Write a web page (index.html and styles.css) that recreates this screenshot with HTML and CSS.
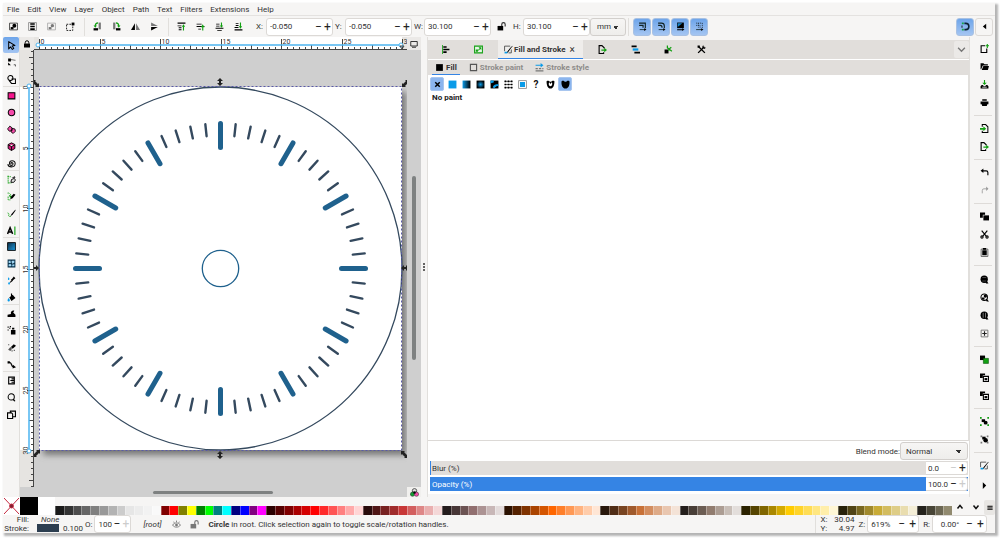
FILE: index.html
```html
<!DOCTYPE html>
<html lang="en">
<head>
<meta charset="utf-8">
<title>Vector editor</title>
<link rel="stylesheet" href="styles.css">
</head>
<body>
<svg class="defs" aria-hidden="true">
  <defs>
    <linearGradient id="g-lin"><stop offset="0" stop-color="#0a9be8"/><stop offset="1" stop-color="#000"/></linearGradient>
    <linearGradient id="g-dia" x2="1" y2="1"><stop offset="0" stop-color="#0b2c44"/><stop offset="1" stop-color="#1e9be0"/></linearGradient>
    <radialGradient id="g-rad"><stop offset="0" stop-color="#0a9be8"/><stop offset="1" stop-color="#000"/></radialGradient>
    <symbol id="i-selall" viewBox="0 0 16 16"><path fill="none" stroke="#333" stroke-width="1.5" d="M1 2h14v12H1z"/><path d="M3 9h5v4H3z"/><circle cx="9.500" cy="6.500" r="3.500"/></symbol>
    <symbol id="i-sellayers" viewBox="0 0 16 16"><path fill="none" stroke="#888" stroke-width="1.500" d="M1 1h14v14H1z"/><path d="M4 2h8v3H4zM4 6.500h8v3H4zM4 11h8v3H4z"/></symbol>
    <symbol id="i-desel" viewBox="0 0 16 16"><path fill="none" stroke="#aaa" stroke-width="1.500" d="M1 2h14v12H1z"/><path fill="#777" d="M3 9h5v4H3z"/><circle cx="9.500" cy="6.500" r="3" fill="#777"/></symbol>
    <symbol id="i-touch" viewBox="0 0 16 16"><path fill="none" stroke="#000" stroke-width="1.500" stroke-dasharray="3 2" d="M1 4h11v11H1z"/><path d="M10 1h5v5h-5z"/></symbol>
    <symbol id="i-rotl" viewBox="0 0 16 16"><path d="M1 11h8v4H1z"/><path fill="#777" d="M10 1h4v12h-4z"/><path fill="none" stroke="#12a012" stroke-width="2" d="M9 1.500C5 1.500 4 4 4 7"/><path fill="#12a012" d="M1 6h6l-3 4z"/></symbol>
    <symbol id="i-rotr" viewBox="0 0 16 16"><path d="M7 11h8v4H7z"/><path fill="#777" d="M2 1h4v12H2z"/><path fill="none" stroke="#12a012" stroke-width="2" d="M7 1.500c4 0 5 2.500 5 5.500"/><path fill="#12a012" d="M9 6h6l-3 4z"/></symbol>
    <symbol id="i-fliph" viewBox="0 0 16 16"><path d="M7 2v12H0z"/><path fill="#777" d="M9 2v12h7z"/></symbol>
    <symbol id="i-flipv" viewBox="0 0 16 16"><path d="M2 9h12L2 15z"/><path fill="#777" d="M2 7h12L2 1z"/></symbol>
    <symbol id="i-top" viewBox="0 0 16 16"><path d="M1 1h14v2H1zM1 6h7v1.500H1zM3 9.500h5V11H3zM3 13h5v1.500H3z"/><path fill="#12a012" d="M8.500 8.500 11.500 4l3 4.500h-2V15h-2V8.500z"/></symbol>
    <symbol id="i-raise" viewBox="0 0 16 16"><path d="M1 3h9v1.500H1zM1 7h14v2H1zM4 12h5v1.500H4z"/><path fill="#12a012" d="M8.500 9.500 12 4l3 5.500h-2V15h-2V9.500z"/></symbol>
    <symbol id="i-lower" viewBox="0 0 16 16"><path d="M1 10h14v2H1zM2 3h6v1.500H2zM2 6.500h6V8H2zM4 14h8v1.500H4z"/><path fill="#12a012" d="M8.500 6h2V1h2v5h2l-3 4z"/></symbol>
    <symbol id="i-bottom" viewBox="0 0 16 16"><path d="M1 13h14v2H1zM3 2h5v1.500H3zM3 5.500h5V7H3zM1 9h7v1.500H1z"/><path fill="#12a012" d="M8.500 7.500h2V1h2v6.500h2l-3 4.500z"/></symbol>
    <symbol id="i-unlock" viewBox="0 0 16 16"><path d="M1 7h10v8H1z"/><path fill="none" stroke="currentColor" stroke-width="2" d="M8.500 7V4a3 3 0 0 1 6 0v4"/></symbol>
    <symbol id="i-lock" viewBox="0 0 16 16"><path d="M2 7h12v8H2z"/><path fill="none" stroke="#000" stroke-width="2" d="M4.500 7V5a3.500 3.500 0 0 1 7 0v2"/></symbol>
    <symbol id="i-af1" viewBox="0 0 16 16"><path fill="none" stroke="#122" stroke-width="2" d="M2 2h11v9M2 6h7v4"/><path fill="none" stroke="#122" stroke-width="1.500" d="M3 13.500h10"/><path d="m11 11 4 2.500-4 2.500z"/></symbol>
    <symbol id="i-af2" viewBox="0 0 16 16"><path fill="none" stroke="#122" stroke-width="2" d="M2 2h6q5 0 5 5v4M2 6h4q3 0 3 4"/><path fill="none" stroke="#122" stroke-width="1.500" d="M3 13.500h10"/><path d="m11 11 4 2.500-4 2.500z"/></symbol>
    <symbol id="i-af3" viewBox="0 0 16 16"><path d="M2 1h12v10H2z"/><path fill="#1683c9" d="M3 2h8L3 9z"/><path d="M2 13h10v1.500H2zM11 11l4 2.500-4 2.500z"/></symbol>
    <symbol id="i-af4" viewBox="0 0 16 16"><path fill="none" stroke="#234" stroke-width="1.600" stroke-dasharray="2 1.500" d="M2 2h11v9M2 6h7v5M6 2v8"/><path fill="none" stroke="#122" stroke-width="1.500" d="M2 13.500h10"/><path d="m11 11 4 2.500-4 2.500z"/></symbol>
    <symbol id="i-snap" viewBox="0 0 16 16"><path fill="none" stroke="#0c2233" stroke-width="2.800" d="M6 2.500h2.500a5.500 5.500 0 0 1 0 11H6"/><path fill="#16a34a" d="M1.500 1H5v3H1.500zM1.500 12H5v3H1.500z"/><path d="M1 6h1.500v4H1z"/></symbol>
    <symbol id="i-arrl" viewBox="0 0 16 16"><path d="M11 3v10L5 8z"/></symbol>
    <symbol id="i-arrr" viewBox="0 0 16 16"><path d="M5 2v12l6-6z"/></symbol>
    <symbol id="i-sel" viewBox="0 0 16 16"><path fill="#9cc0f0" stroke="#000" stroke-width="1.800" stroke-linejoin="round" d="m3 1 11 7-5 1 3 4-2.500 2-3-4.500L3 14z"/></symbol>
    <symbol id="i-node" viewBox="0 0 16 16"><path d="M2 1h5v5H2zM2 8l5 5H2z"/><path fill="none" stroke="#444" stroke-width="1.500" d="M7 3c4 0 5 1 8 1M12 12h3v3"/></symbol>
    <symbol id="i-shapeb" viewBox="0 0 16 16"><g fill="none" stroke="#000" stroke-width="1.800"><circle cx="6" cy="5.500" r="4.500"/><path d="M8 7h7v8H8l-4-5"/></g></symbol>
    <symbol id="i-rect" viewBox="0 0 16 16"><path fill="#f5168c" stroke="#000" stroke-width="1.800" d="M2 3h12v11H2z"/></symbol>
    <symbol id="i-ell" viewBox="0 0 16 16"><circle cx="8" cy="8" r="5.800" fill="#f54aaa" stroke="#000" stroke-width="1.800"/></symbol>
    <symbol id="i-star" viewBox="0 0 16 16"><path fill="#f54aaa" stroke="#000" stroke-width="1.500" d="m5 2 4 3 0 5-5 1-3-4zM9 6l5 1 1 4-4 4-4-3z"/></symbol>
    <symbol id="i-box3" viewBox="0 0 16 16"><path fill="#d3187b" stroke="#000" stroke-width="1.600" d="m8 1.500 6 3v7L8 15l-6-3.500v-7zM2 5l6 3 6-3M8 8v7"/></symbol>
    <symbol id="i-spiral" viewBox="0 0 16 16"><path fill="none" stroke="#111" stroke-width="1.900" d="M8 9c-1.500 0-1.500-2.500.5-2.500 3 0 3 5-.5 5-5 0-5-8.500 1-8.500 8 0 7 11-1 11-3 0-6-1-6.500-5"/></symbol>
    <symbol id="i-pen" viewBox="0 0 16 16"><path fill="none" stroke="#12a012" stroke-width="1.500" stroke-dasharray="3 1" d="M2 1v14M1 3h6M2 14h6"/><path fill="#ddd" stroke="#000" stroke-width="1.600" d="m7 13 1-5 5-2 2 3-3 4z"/><path d="m8 5 6-3 1 3z"/></symbol>
    <symbol id="i-pencil" viewBox="0 0 16 16"><path fill="none" stroke="#12a012" stroke-width="1.500" stroke-dasharray="3 1" d="M1 2c4-1 4 3 7 3M2 8v6h4"/><path d="m6 12 1-4 5-5 3 2-5 6-4 2z"/><path fill="#12a012" d="m3 5 5 2-2 4z"/></symbol>
    <symbol id="i-callig" viewBox="0 0 16 16"><path fill="none" stroke="#12a012" stroke-width="1.500" stroke-dasharray="3 1" d="M1 7c3 1 3 2 2 4s2 3 4 2"/><path d="M15 1 8 9l-2 4 4-3 5-7z"/></symbol>
    <symbol id="i-text" viewBox="0 0 16 16"><path fill="none" stroke="#000" stroke-width="2.600" d="M1 14 5.500 3 10 14M3 10.500h5"/><path fill="#12a012" d="M13 1h2v15h-2z"/></symbol>
    <symbol id="i-grad" viewBox="0 0 16 16"><path fill="url(#g-dia)" stroke="#000" stroke-width="1.500" d="M1 1h14v14H1z"/></symbol>
    <symbol id="i-mesh" viewBox="0 0 16 16"><path fill="#9ed6f4" stroke="#07314b" stroke-width="1.800" d="M2 2h12v12H2zM2 9c4-4 8 3 12-2M8 2C5 6 11 10 8 14"/></symbol>
    <symbol id="i-drop" viewBox="0 0 16 16"><path d="m7 6 2-1 3-4 3 3-4 3-1 2zM8 7 5 11l1 1 4-3z"/><path fill="#0a9be8" d="M3 2c3 4 0 5 0 5S0 6 3 2zM4 10c3 4 0 6-1 5s-2-2 1-5z"/></symbol>
    <symbol id="i-bucket" viewBox="0 0 16 16"><path d="m4 8 6-5 5 6-7 5zM7 1h2v6H7z"/><path fill="#0a9be8" d="M3 9c4 5 1 6 0 6s-4-1 0-6z"/></symbol>
    <symbol id="i-tweak" viewBox="0 0 16 16"><path d="M1 14v-4l6-1c-1-4 2-7 6-6l-2 3 4 4v4z"/></symbol>
    <symbol id="i-spray" viewBox="0 0 16 16"><path d="M7 7h8v8H7zM9 3h4v3H9z"/><path d="M1 1h2v2H1zM4 3h2v2H4zM1 6h2v2H1zM5 0h2v2H5z"/></symbol>
    <symbol id="i-eraser" viewBox="0 0 16 16"><path d="m7 7 5-5 4 3-6 5z"/><path fill="#555" d="m2 12 4-5 3 3-3 4zM2 2h2v2H2zM12 12h2v2h-2zM8 13h2v2H8z"/></symbol>
    <symbol id="i-conn" viewBox="0 0 16 16"><path fill="none" stroke="#000" stroke-width="2" d="M3 4c8 0 2 8 9 8"/><path d="M1 2h4v4H1zM10 8l6 5-6 2z"/></symbol>
    <symbol id="i-measure" viewBox="0 0 16 16"><path fill="none" stroke="#000" stroke-width="2" d="M3 2h10v12H3zM8 5h4M6 8h6M8 11h4"/></symbol>
    <symbol id="i-zoom" viewBox="0 0 16 16"><circle cx="7.500" cy="7" r="5.500" fill="none" stroke="#000" stroke-width="1.800"/><path d="m10 12 2-2 3 4-2 1z"/></symbol>
    <symbol id="i-pages" viewBox="0 0 16 16"><path fill="none" stroke="#000" stroke-width="2" d="M6 4V2h9v10h-4M1 5h7l2 2v8H1z"/></symbol>
    <symbol id="i-new" viewBox="0 0 16 16"><path fill="none" stroke="#000" stroke-width="2" d="M9 3H2v12h10V8"/><path fill="#12a012" d="M12 0h2v2h2v2h-2v3h-2V4h-2V2h2z"/></symbol>
    <symbol id="i-open" viewBox="0 0 16 16"><path d="M1 2h5l2 2h6v2H5l-3 7H1zM6 7h10l-2 7H3z"/></symbol>
    <symbol id="i-save" viewBox="0 0 16 16"><path fill="#12a012" d="M7 0h2v5h3L8 9 4 5h3z"/><path d="m1 15 0-4 2-2h2l2 2h2l2-2h2l2 2v4z"/><path fill="#ddd" d="M4 12h8v1.500H4z"/></symbol>
    <symbol id="i-print" viewBox="0 0 16 16"><path d="M4 2h8v3H4zM1 6h14v5h-2l-1 3H4l-1-3H1z"/></symbol>
    <symbol id="i-import" viewBox="0 0 16 16"><path fill="none" stroke="#000" stroke-width="1.800" d="M4 5V1h6l4 4v10H4v-3"/><path fill="#12a012" d="M0 7h6V4l5 4.500L6 13v-3H0z"/></symbol>
    <symbol id="i-export" viewBox="0 0 16 16"><path fill="none" stroke="#000" stroke-width="2" d="M10 13v2H2V1h5l4 4v1"/><path fill="#12a012" d="M6 8h5V5l5 4-5 4v-3H6z"/></symbol>
    <symbol id="i-undo" viewBox="0 0 16 16"><path fill="none" stroke="#000" stroke-width="2" d="M4 5h7q3 0 3 3v5"/><path d="M6 1v8L1 5z"/></symbol>
    <symbol id="i-redo" viewBox="0 0 16 16"><path fill="none" stroke="#999" stroke-width="1.500" d="M4 13V8q0-3 3-3h6"/><path fill="#999" d="M11 1v8l4-4z"/></symbol>
    <symbol id="i-copy" viewBox="0 0 16 16"><path d="M0 1h9v4H5v5H0z"/><path d="M6 6h10v9H6z"/></symbol>
    <symbol id="i-cut" viewBox="0 0 16 16"><g fill="none" stroke="#000" stroke-width="2"><path d="m3 1 8 10M13 1 5 11"/><circle cx="3.500" cy="12.500" r="2"/><circle cx="12.500" cy="12.500" r="2"/></g></symbol>
    <symbol id="i-paste" viewBox="0 0 16 16"><path fill="none" stroke="#555" stroke-width="1.500" d="M2 2h12v13H2z"/><path d="M4 4h8v9H4zM5 0h6v3H5z"/></symbol>
    <symbol id="i-zsel" viewBox="0 0 16 16"><circle cx="7.500" cy="7.500" r="6.500"/><path fill="#888" d="M4 4h7v1H4zM4 10h7v1H4z"/><path d="m9 13 3-3 3 5h-4z"/></symbol>
    <symbol id="i-zdraw" viewBox="0 0 16 16"><circle cx="7.500" cy="7.500" r="5.800" fill="#f6f5f4" stroke="#000" stroke-width="1.800"/><path d="M3 8h5v4H4z"/><circle cx="9.500" cy="5.500" r="3"/><path d="m10 12 2-2 4 5h-4z"/></symbol>
    <symbol id="i-zpage" viewBox="0 0 16 16"><circle cx="7.500" cy="7.500" r="6.500"/><path fill="#ccc" d="M5 3h1v9H5zM9 3h1v9H9z"/><path d="m9 13 3-3 3 5h-4z"/></symbol>
    <symbol id="i-zcenter" viewBox="0 0 16 16"><path fill="none" stroke="#666" stroke-width="1.500" d="M2 2h12v12H2z"/><path fill="#222" d="M7 4h2v8H7zM4 7h8v2H4z"/></symbol>
    <symbol id="i-dup" viewBox="0 0 16 16"><path d="M0 1h9v8H0z"/><path fill="#12a012" stroke="#064b06" d="M6 6h9v9H6z"/></symbol>
    <symbol id="i-clone" viewBox="0 0 16 16"><path d="M0 1h9v3H5v5H0z"/><path fill="#fff" stroke="#000" stroke-width="2" d="M6 6h9v9H6z"/><path d="M8 9h5v4H8z"/></symbol>
    <symbol id="i-group" viewBox="0 0 16 16"><path fill="#12a012" d="M0 0h3v3H0zM13 0h3v3h-3zM0 13h3v3H0zM13 13h3v3h-3z"/><path d="M3 4h6v5H3z"/><circle cx="10" cy="10" r="3.500"/></symbol>
    <symbol id="i-ungroup" viewBox="0 0 16 16"><path fill="#777" d="M1 1h3v3H1zM12 1h3v3h-3zM1 12h3v3H1zM12 12h3v3h-3z"/><path d="M4 3h6v5H4z"/><circle cx="10" cy="9.500" r="4"/></symbol>
    <symbol id="i-fs" viewBox="0 0 16 16"><path fill="none" stroke="#444" stroke-width="1.500" d="M11 2H1v9M5 14l10-12"/><path d="M15 1 7 13l-2 1 2-4z"/><path fill="none" stroke="#444" stroke-width="1.500" d="M13 8v6H8"/><path fill="#0a9be8" d="M1 12h5v3H1z"/></symbol>
    <symbol id="i-align" viewBox="0 0 16 16"><path fill="#12a012" d="M2 0h1.500v16H2z"/><path d="M4 2h6v3H4zM4 6.500h11v3H4zM4 11h6v3H4z"/></symbol>
    <symbol id="i-trans" viewBox="0 0 16 16"><path fill="#e7f5e7" stroke="#12a012" stroke-width="1.800" d="M1 2h14v12H1z"/><path fill="#12a012" d="M13 4v5l-2-2-3 3-1-1 3-3-2-2zM3 8h4v4H3z"/></symbol>
    <symbol id="i-layers" viewBox="0 0 16 16"><path d="M1 1h9v3H1zM6 12h10v3H6z"/><path fill="#0a9be8" d="M3 6h10v4H3z"/></symbol>
    <symbol id="i-xml" viewBox="0 0 16 16"><path d="M1 8h7v7H1z"/><path fill="none" stroke="#12a012" stroke-width="2.200" d="M6 1v4l3 2 5 4M9 7l4-3M9 7l-1 3"/></symbol>
    <symbol id="i-prefs" viewBox="0 0 16 16"><path fill="none" stroke="#000" stroke-width="2.400" d="m3 3 11 11M2 14 13 3"/><path d="M1 1h4v4H1zM11 0l1 4 4 1-3 2-4-3z"/></symbol>
    <symbol id="i-x" viewBox="0 0 16 16"><path fill="none" stroke="#000" stroke-width="2.600" d="m4 4 8 8m0-8-8 8"/></symbol>
    <symbol id="i-flat" viewBox="0 0 16 16"><path fill="#0a9be8" d="M1 1h14v14H1z"/></symbol>
    <symbol id="i-lin" viewBox="0 0 16 16"><path fill="url(#g-lin)" d="M1 1h14v14H1z"/></symbol>
    <symbol id="i-rad" viewBox="0 0 16 16"><path fill="url(#g-rad)" d="M1 1h14v14H1z"/></symbol>
    <symbol id="i-meshp" viewBox="0 0 16 16"><path d="M1 1h14v14H1z"/><path fill="#0a9be8" d="M1 1h5c3 4-2 4-5 5zM15 7v4c-5-2-6 6-10 2 1-5 5-5 10-6z"/></symbol>
    <symbol id="i-pat" viewBox="0 0 16 16"><path d="M1 1h3v3H1zM6.500 1h3v3h-3zM12 1h3v3h-3zM1 6.500h3v3H1zM6.500 6.500h3v3h-3zM12 6.500h3v3h-3zM1 12h3v3H1zM6.500 12h3v3h-3zM12 12h3v3h-3z"/><path stroke="#000" d="M1 2.500h14M1 8h14M1 13.500h14"/></symbol>
    <symbol id="i-swatch" viewBox="0 0 16 16"><path fill="#fff" stroke="#888" stroke-width="1.500" d="M1 1h14v14H1z"/><path fill="#0a9be8" d="M3.500 3.500h9v9h-9z"/></symbol>
    <symbol id="i-evenodd" viewBox="0 0 16 16"><path fill-rule="evenodd" d="M1 2c3-2 5 0 6 1h2c1-1 3-3 6-1 0 7-2 13-7 13S1 9 1 2zm5 2c-2 2-1 7 2 7s4-5 2-7L8 7z"/></symbol>
    <symbol id="i-nonzero" viewBox="0 0 16 16"><path d="M1 2c3-2 5 0 6 1h2c1-1 3-3 6-1 1 7-2 13-7 13S0 9 1 2z"/></symbol>
    <symbol id="i-sqf" viewBox="0 0 16 16"><path d="M2 2h12v12H2z"/></symbol>
    <symbol id="i-sqo" viewBox="0 0 16 16"><path fill="none" stroke="#555" stroke-width="2" d="M2.500 2.500h11v11h-11z"/></symbol>
    <symbol id="i-sstyle" viewBox="0 0 16 16"><path fill="#0a9be8" d="M1 3h9V0l5 4-5 4V5H1z"/><path fill="#777" d="M1 9h4v2H1zM7 9h4v2H7zM13 9h2v2h-2zM1 13h14v2H1z"/></symbol>
    <symbol id="i-chev" viewBox="0 0 16 16"><path fill="none" stroke="#777" stroke-width="2.400" d="m2 5 6 6 6-6"/></symbol>
    <symbol id="i-up" viewBox="0 0 16 16"><path fill="none" stroke="#111" stroke-width="3" d="m3 11 5-6 5 6"/></symbol>
    <symbol id="i-down" viewBox="0 0 16 16"><path fill="none" stroke="#111" stroke-width="3" d="m3 5 5 6 5-6"/></symbol>
    <symbol id="i-menu" viewBox="0 0 16 16"><path d="M1 2h14v2.500H1zM1 6.500h14V9H1zM1 11h14v2.500H1z"/></symbol>
    <symbol id="i-monitor" viewBox="0 0 16 16"><path fill="none" stroke="#222" stroke-width="1.800" d="M1.500 3h13v9h-13zM4 14.500h8"/></symbol>
    <symbol id="i-cms" viewBox="0 0 16 16"><circle cx="8" cy="5" r="4" fill="#ddd" stroke="#444" stroke-width="1.500"/><circle cx="4.500" cy="11" r="3.800" fill="#12a032" stroke="#333"/><circle cx="11.500" cy="11" r="3.800" fill="#f54aaa" stroke="#333"/><path d="M6 6h4v4H6z"/></symbol>
    <symbol id="i-eye" viewBox="0 0 16 16"><path fill="none" stroke="currentColor" stroke-width="1.600" d="M1 9c3-5 11-5 14 0-3 5-11 5-14 0zM3 3l1 2M8 1v3M13 3l-1 2"/><circle cx="8" cy="9" r="2.500"/></symbol>
    <symbol id="h-v" viewBox="0 0 8 8"><path fill="#222" d="m4 0 3 3H5v2h2L4 8 1 5h2V3H1z"/></symbol>
    <symbol id="h-d" viewBox="0 0 8 8"><path fill="#222" d="M0 1h4L3 2l3 3 1-1v4H3l1-1-3-3-1 1z"/></symbol>
  </defs>
</svg>

<div class="window">
  <nav class="menubar" aria-label="Menu">
    <button>File</button><button>Edit</button><button>View</button><button>Layer</button><button>Object</button><button>Path</button><button>Text</button><button>Filters</button><button>Extensions</button><button>Help</button>
  </nav>

  <div class="commandbar">
    <div class="tool-group" data-icons="selall sellayers desel touch"></div>
    <div class="tool-group" data-icons="rotl rotr fliph flipv"></div>
    <div class="tool-group" data-icons="top raise lower bottom"></div>
    <div class="fields">
      <label for="fx">X:</label><span class="spin"><input id="fx" value="-0.050"><button>−</button><button>+</button></span>
      <label for="fy">Y:</label><span class="spin"><input id="fy" value="-0.050"><button>−</button><button>+</button></span>
      <label for="fw">W:</label><span class="spin"><input id="fw" value="30.100"><button>−</button><button>+</button></span>
      <button class="ratio" aria-label="Lock ratio"><svg><use href="#i-unlock"/></svg></button>
      <label for="fh">H:</label><span class="spin"><input id="fh" value="30.100"><button>−</button><button>+</button></span>
      <select class="units" aria-label="Units"><option>mm</option></select>
    </div>
    <div class="toggles">
      <button class="toggle" aria-label="Scale stroke"><svg><use href="#i-af1"/></svg></button>
      <button class="toggle" aria-label="Scale corners"><svg><use href="#i-af2"/></svg></button>
      <button class="toggle" aria-label="Move gradients"><svg><use href="#i-af3"/></svg></button>
      <button class="toggle" aria-label="Move patterns"><svg><use href="#i-af4"/></svg></button>
    </div>
    <div class="snap">
      <button class="toggle" aria-label="Snap"><svg><use href="#i-snap"/></svg></button>
      <button class="plain" aria-label="Snap options"><svg><use href="#i-arrl"/></svg></button>
    </div>
  </div>

  <main class="work">
    <aside class="toolbox">
      <div class="tools" data-icons="sel node shapeb"></div>
      <div class="tools" data-icons="rect ell star box3 spiral"></div>
      <div class="tools" data-icons="pen pencil callig text"></div>
      <div class="tools" data-icons="grad mesh drop bucket"></div>
      <div class="tools" data-icons="tweak spray eraser conn"></div>
      <div class="tools" data-icons="measure zoom pages"></div>
    </aside>

    <section class="stage">
      <button class="corner" aria-label="Lock guides"><svg><use href="#i-lock"/></svg></button>
      <svg class="ruler ruler-h" id="ruler-h"></svg>
      <button class="corner" aria-label="Display mode"><svg><use href="#i-monitor"/></svg></button>
      <svg class="ruler ruler-v" id="ruler-v"></svg>
      <svg class="canvas" role="img" aria-label="Clock face drawing">
        <defs><filter id="soft" x="-10%" y="-10%" width="120%" height="120%"><feGaussianBlur stdDeviation="3"/></filter></defs>
        <rect class="page-shadow" x="9" y="42" width="363" height="363" filter="url(#soft)"/>
        <rect class="page" x="5" y="37" width="363" height="363"/>
        <circle class="rim" cx="186.500" cy="218.500" r="181.500"/>
        <g id="marks" transform="translate(186.500 218.500)"></g>
        <circle class="hub" cx="186.500" cy="218.500" r="18.200"/>
        <rect class="marquee" x="5.500" y="36.500" width="362" height="364"/>
        <use href="#h-v" x="182" y="28" width="8" height="8"/>
        <use href="#h-v" x="182" y="401" width="8" height="8"/>
        <use href="#h-v" x="-4" y="-4" width="8" height="8" transform="translate(1 218) rotate(90)"/>
        <use href="#h-v" x="-4" y="-4" width="8" height="8" transform="translate(371 218) rotate(90)"/>
        <use href="#h-d" x="-2" y="29" width="8" height="8"/>
        <use href="#h-d" x="-4" y="-4" width="8" height="8" transform="translate(371 33) scale(-1 1)"/>
        <use href="#h-d" x="-4" y="-4" width="8" height="8" transform="translate(2 403) scale(-1 1)"/>
        <use href="#h-d" x="367" y="400" width="8" height="8"/>
      </svg>
      <div class="vscroll"><div class="thumb"></div></div>
      <div class="hscroll"><div class="thumb"></div></div>
      <button class="cms" aria-label="Color management"><svg><use href="#i-cms"/></svg></button>
    </section>

    <div class="splitter"><i></i><i></i><i></i></div>

    <section class="dock">
      <div class="dock-tabs">
        <button class="tab" aria-label="Align"><svg><use href="#i-align"/></svg></button>
        <button class="tab" aria-label="Transform"><svg><use href="#i-trans"/></svg></button>
        <button class="tab active"><svg><use href="#i-fs"/></svg>Fill and Stroke<span class="close">×</span></button>
        <button class="tab" aria-label="Export"><svg><use href="#i-export"/></svg></button>
        <button class="tab" aria-label="Layers"><svg><use href="#i-layers"/></svg></button>
        <button class="tab" aria-label="XML"><svg><use href="#i-xml"/></svg></button>
        <button class="tab" aria-label="Preferences"><svg><use href="#i-prefs"/></svg></button>
        <button class="tab-more" aria-label="More panels"><svg><use href="#i-chev"/></svg></button>
      </div>
      <div class="sub-tabs">
        <button class="sub active"><svg><use href="#i-sqf"/></svg>Fill</button>
        <button class="sub"><svg><use href="#i-sqo"/></svg>Stroke paint</button>
        <button class="sub"><svg><use href="#i-sstyle"/></svg>Stroke style</button>
      </div>
      <div class="paint">
        <div class="paint-types">
          <button class="on" aria-label="No paint"><svg><use href="#i-x"/></svg></button>
          <button aria-label="Flat"><svg><use href="#i-flat"/></svg></button>
          <button aria-label="Linear"><svg><use href="#i-lin"/></svg></button>
          <button aria-label="Radial"><svg><use href="#i-rad"/></svg></button>
          <button aria-label="Mesh"><svg><use href="#i-meshp"/></svg></button>
          <button aria-label="Pattern"><svg><use href="#i-pat"/></svg></button>
          <button aria-label="Swatch"><svg><use href="#i-swatch"/></svg></button>
          <button class="unknown">?</button>
          <button aria-label="Even-odd"><svg><use href="#i-evenodd"/></svg></button>
          <button class="on" aria-label="Non-zero"><svg><use href="#i-nonzero"/></svg></button>
        </div>
        <p class="paint-name">No paint</p>
      </div>
      <div class="compositing">
        <div class="blend"><label for="blend">Blend mode:</label><select id="blend"><option>Normal</option></select></div>
        <div class="amount blur"><label for="blur">Blur (%)</label><span class="spin"><input id="blur" value="0.0"><button class="dim">−</button><button>+</button></span></div>
        <div class="amount opacity"><label for="opac">Opacity (%)</label><span class="spin"><input id="opac" value="100.0"><button>−</button><button class="dim">+</button></span></div>
      </div>
    </section>

    <aside class="actions">
      <div class="action-groups">
        <div class="acts" data-icons="new open save print"></div><hr>
        <div class="acts" data-icons="import export"></div><hr>
        <div class="acts" data-icons="undo redo"></div><hr>
        <div class="acts" data-icons="copy cut paste"></div><hr>
        <div class="acts" data-icons="zsel zdraw zpage zcenter"></div><hr>
        <div class="acts" data-icons="dup clone clone"></div><hr>
        <div class="acts" data-icons="group ungroup"></div><hr>
        <div class="acts" data-icons="fs"></div>
      </div>
      <button class="more" aria-label="More"><svg><use href="#i-arrr"/></svg></button>
    </aside>
  </main>

  <div class="palette">
    <button class="none" aria-label="None"><svg viewBox="0 0 16 16" preserveAspectRatio="none"><path d="m0 0 16 16M16 0 0 16"/><circle cx="8" cy="8" r="2"/></svg></button>
    <button class="black" aria-label="Black"></button>
    <button class="white" aria-label="White"></button>
    <div class="swatches" id="swatches"></div>
    <button class="pal-btn" aria-label="Previous row"><svg><use href="#i-up"/></svg></button>
    <button class="pal-btn" aria-label="Next row"><svg><use href="#i-down"/></svg></button>
    <button class="pal-menu" aria-label="Palette menu"><svg><use href="#i-menu"/></svg></button>
  </div>

  <footer class="status">
    <div class="style-ind">
      <span class="key">Fill:</span><em>None</em><span></span>
      <span class="key">Stroke:</span><span class="stroke-color"></span><span>0.100</span>
    </div>
    <label for="op">O:</label><span class="spin op"><input id="op" value="100"><button>−</button><button class="dim">+</button></span>
    <em class="layer">[root]</em>
    <button class="mini" aria-label="Visibility"><svg><use href="#i-eye"/></svg></button>
    <button class="mini" aria-label="Lock layer"><svg><use href="#i-unlock"/></svg></button>
    <p class="message"><b>Circle</b> in root. Click selection again to toggle scale/rotation handles.</p>
    <div class="coords"><span>X:</span><span>30.04</span><span>Y:</span><span>4.97</span></div>
    <label for="zm">Z:</label><span class="spin zm"><input id="zm" value="619%"><button>−</button><button>+</button></span>
    <label class="rot" for="rt">R:</label><span class="spin rt"><input id="rt" value="0.00°"><button>−</button><button>+</button></span>
  </footer>
</div>
<script src="script.js"></script>
</body>
</html>
```
FILE: styles.css
```css
* { box-sizing: border-box; }
body {
  margin: 0;
  height: 100vh;
  padding: 3px 5px 5px 3px;
  background: #fff;
  color: #333;
  font: 8px/9px Roboto, "Noto Sans", sans-serif;
}
button, input, select { font: inherit; color: inherit; margin: 0; padding: 0; border: 0; background: none; }
button { display: flex; align-items: center; justify-content: center; }
svg { display: block; flex: none; }
button svg { width: 9px; height: 9px; }
p { margin: 0; }
.defs { position: absolute; width: 0; height: 0; }
.window {
  height: 100%;
  display: flex;
  flex-direction: column;
  background: #f6f5f4;
  box-shadow: 2px 2px 2px 1px #b4b4b4;
}

.menubar { display: flex; gap: 8px; height: 13px; padding: 0 4px; border-bottom: 1px solid #e4e2e0; flex: none; }

.commandbar { display: flex; align-items: center; height: 21px; flex: none; }
.tool-group { display: flex; padding: 0 4px 0 1px; border-right: 1px solid #e1dfdc; }
.tool-group + .tool-group { padding-left: 3px; }
.tool-group:nth-child(3) { border-right: 0; }
.tool-group button { width: 19px; height: 18px; }
.fields { display: flex; align-items: center; padding-left: 2px; }
.fields label { width: 10px; margin-left: 2px; }
.spin { display: flex; align-items: center; height: 18px; background: #fff; border: 1px solid #dcd9d6; border-radius: 3px; }
.spin input { width: 47px; padding-left: 3px; min-width: 0; }
.spin button { width: 9px; height: 12px; font-size: 12px; line-height: 12px; color: #222; }
.spin button.dim { color: #ccc; }
.ratio { width: 20px; height: 18px; }
.units, .blend select {
  appearance: none;
  border: 1px solid #d2cfcc;
  border-radius: 3px;
  background: linear-gradient(45deg, transparent 50%, #333 50%) 22px 7px / 3px 3px no-repeat,
    linear-gradient(135deg, #333 50%, transparent 50%) 25px 7px / 3px 3px no-repeat,
    linear-gradient(#f6f5f4, #eeedeb);
}
.units { width: 36px; height: 18px; padding-left: 6px; }
.toggles { display: flex; gap: 1px; margin-left: 2px; padding-left: 4px; border-left: 1px solid #e1dfdc; }
.toggle { width: 18px; height: 18px; border: 1px solid #a8c1e3; border-radius: 3px; background: linear-gradient(#6ea5ea, #a4c5f2); color: #111; }
.snap { display: flex; gap: 1px; margin-left: auto; padding-right: 2px; }
.plain { width: 18px; height: 18px; border: 1px solid #dcd9d6; border-radius: 3px; }

.work {
  flex: 1;
  min-height: 0;
  display: grid;
  grid-template-columns: 17px minmax(0, 401fr) 6px minmax(0, 542fr) 26px;
}
.toolbox { border-right: 1px solid #e1dfdc; }
.tools { display: flex; flex-direction: column; gap: 1px; }
.tools + .tools { box-shadow: 0 -1px #e1dfdc; }
.tools button { height: 16px; }
.tools:first-child button:first-child { border-radius: 2px; background: linear-gradient(#6ea5ea, #a4c5f2); }

.stage {
  display: grid;
  grid-template-columns: 14px minmax(0, 1fr) 14px;
  grid-template-rows: 13px minmax(0, 1fr) 10px;
  background: #cfcfcf;
}
.corner { background: #ebe9e7; }
.corner svg { width: 8px; height: 8px; }
.ruler { width: 100%; height: 100%; background: #e6e4e1; font-size: 7px; }
.ruler .span { fill: #fff; }
.ruler path { stroke: #444; fill: none; }
.ruler .extent { stroke: #4db4f0; stroke-width: 1.5; }
.ruler circle { fill: #fff; stroke: #4db4f0; stroke-width: 1; }
.ruler text { fill: #333; }
.canvas { width: 100%; height: 100%; background: #cfcfcf; overflow: hidden; }
.page-shadow { fill: #777; }
.page { fill: #fff; }
.rim { fill: none; stroke: #34495e; stroke-width: 1.3; }
.hub { fill: none; stroke: #1f618d; stroke-width: 1.3; }
.minute { stroke: #34495e; stroke-width: 2.4; stroke-linecap: round; }
.hour { stroke: #1f618d; stroke-width: 5; stroke-linecap: round; }
.marquee { fill: none; stroke: #5a5aa8; stroke-width: 1; stroke-dasharray: 2 2; }
.vscroll { display: flex; flex-direction: column; align-items: center; }
.vscroll .thumb { width: 4px; height: 42%; margin-top: 126px; border-radius: 2px; background: #7e8181; }
.hscroll { grid-column: 1 / 3; display: flex; align-items: center; }
.hscroll .thumb { width: 31%; height: 3px; margin-left: 133px; border-radius: 2px; background: #7e8181; }
.cms { background: #f1f0ee; }

.splitter { display: flex; flex-direction: column; align-items: center; justify-content: center; gap: 1px; }
.splitter i { width: 2px; height: 2px; background: #333; border-radius: 1px; }

.dock { display: flex; flex-direction: column; padding: 3px 0; background: #f6f5f4; border-left: 1px solid #e1dfdc; min-height: 0; }
.dock-tabs { display: flex; height: 19px; background: #e1dedb; flex: none; padding-left: 1px; }
.tab { width: 33px; }
.tab.active { width: auto; padding: 0 8px 0 6px; margin: 0 3px; gap: 1px; font-weight: 700; background: #efedeb; border-bottom: 1px solid #3584e4; }
.close { margin-left: 3px; font-size: 10px; font-weight: 400; }
.tab-more { width: 15px; margin: 1px 0; margin-left: auto; background: #ebe9e7; border-radius: 2px; }
.sub-tabs { display: flex; height: 16px; padding-left: 4px; background: #e1dedb; border-top: 1px solid #fff; flex: none; }
.sub { gap: 2px; margin-right: 6px; padding: 0 3px; font-weight: 700; color: #8e8c8a; border-bottom: 1px solid transparent; }
.sub.active { color: #333; border-color: #3584e4; }
.paint { flex: 1; background: #fff; border-right: 1px solid #e1dfdc; border-bottom: 1px solid #dcd9d6; min-height: 0; }
.paint-types { display: flex; padding: 2px 1px 0; }
.paint-types button { width: 14px; height: 14px; }
.paint-name { padding: 2px 4px; font-weight: 700; color: #222; }
.paint-types .on { margin: 0 1px; border-radius: 2px; background: #8bb5ee; border: 1px solid #a8c6ef; }
.paint-types .unknown { font-size: 10px; font-weight: 700; color: #111; }
.compositing { background: #fff; padding: 0 1px 1px 2px; flex: none; }
.blend { display: flex; justify-content: flex-end; align-items: center; height: 20px; }
.blend select { width: 68px; height: 18px; padding-left: 5px; background-position: 55px 7px, 58px 7px, 0 0; }
.amount { display: flex; align-items: center; height: 14px; margin-bottom: 2px; background: #e1dedb; border-left: 1px solid #3584e4; }
.amount label { flex: 1; padding-left: 1px; }
.amount .spin { width: 42px; height: 14px; border-left: 0; border-radius: 0 3px 3px 0; }
.amount input { flex: 1; padding-left: 2px; }
.amount.opacity { background: #3584e4; }
.amount.opacity label { color: #fff; }

.actions { display: flex; flex-direction: column; padding: 2px 0 1px 4px; border-left: 1px solid #e1dfdc; }
.action-groups { flex: 1; display: flex; flex-direction: column; justify-content: space-between; }
.acts button { width: 20px; height: 18px; }
.actions hr { width: 18px; height: 1px; margin: 0; border: 0; background: #dedbd8; }
.more { width: 20px; height: 21px; }

.palette { display: flex; height: 18px; flex: none; }
.palette .none { width: 17px; background: #fff; }
.none svg { width: 15px; height: 16px; stroke: #c2223a; fill: #7d2030; }
.black { width: 18px; background: #000; }
.white { width: 17px; background: #fff; }
.swatches { flex: 1; display: flex; height: 9px; align-self: flex-end; min-width: 0; }
.swatches button { flex: 1; box-shadow: inset 1px 0 rgba(255, 255, 255, .3); }
.pal-btn { width: 16px; height: 9px; margin-top: 5px; }
.pal-btn svg { width: 8px; height: 8px; }
.pal-menu { width: 11px; height: 15px; margin-top: 3px; background: #e8e6e3; border-radius: 2px; }
.pal-menu svg { width: 6px; height: 8px; }

.status { display: flex; align-items: center; height: 18px; flex: none; padding-right: 8px; }
.status > label { margin: 0 2px; }
.style-ind { display: grid; grid-template-columns: 26px 26px 20px; grid-template-rows: 9px 9px; column-gap: 4px; }
.style-ind .key { text-align: right; }
.style-ind em { padding-left: 8px; }
.stroke-color { height: 8px; margin-left: 4px; background: #2c3e50; }
.status .op { width: 37px; }
.status .op input { flex: 1; }
.layer { margin: 0 6px 0 12px; }
.mini { width: 18px; color: #777; }
.mini svg { fill: #777; }
.message { flex: 1; padding-left: 5px; white-space: nowrap; overflow: hidden; }
.coords { display: grid; grid-template-columns: 10px 24px; grid-template-rows: 9px 9px; padding-left: 4px; border-left: 1px solid #e1dfdc; }
.coords span:nth-child(even) { text-align: right; }
.status .coords + label { margin-left: 4px; }
.zm { width: 52px; }
.rt { width: 55px; }
.status .zm button, .status .rt button { width: 11px; }
.status .zm input, .status .rt input { flex: 1; }
.rt input { text-align: center; }
.status .rot { margin-left: 4px; }
```
FILE: script.js
```js
const NS = 'http://www.w3.org/2000/svg';

function add(parent, name, attrs, text) {
  const el = document.createElementNS(NS, name);
  for (const key in attrs) el.setAttribute(key, attrs[key]);
  if (text !== undefined) el.textContent = text;
  parent.appendChild(el);
  return el;
}

// Icon buttons
document.querySelectorAll('[data-icons]').forEach(group => {
  group.dataset.icons.split(' ').forEach(name => {
    const button = document.createElement('button');
    button.setAttribute('aria-label', name);
    add(add(button, 'svg', {}), 'use', { href: '#i-' + name });
    group.appendChild(button);
  });
});

// Clock marks
const marks = document.getElementById('marks');
for (let i = 0; i < 60; i++) {
  const hour = i % 5 === 0;
  add(marks, 'line', {
    class: hour ? 'hour' : 'minute',
    y1: -145, y2: hour ? -121 : -133,
    transform: `rotate(${i * 6})`
  });
}

// Rulers: 12.1 px per millimetre, a tick each half millimetre
const SCALE = 12.1;
const rh = document.getElementById('ruler-h');
const rv = document.getElementById('ruler-v');
add(rh, 'rect', { class: 'span', x: 5, y: 0, width: 363, height: 12 });
add(rv, 'rect', { class: 'span', x: 0, y: 37, width: 13, height: 363 });
let dh = 'M0 12.5H2000', dv = 'M13.5 0V2000';
for (let k = -6; k <= 67; k++) {
  const p = Math.round(k * SCALE / 2);
  const len = k % 10 === 0 ? 10 : k % 5 === 0 ? 4 : 2;
  const x = 5.5 + p, y = 37.5 + p;
  if (x > 0) dh += `M${x} 12v-${len}`;
  dv += `M13 ${y}h-${k % 10 === 0 ? 6 : len}`;
  if (k % 10 === 0) {
    add(rh, 'text', { x: x + 1, y: 7 }, k / 2);
    add(rv, 'text', { transform: `translate(8 ${y}) rotate(-90)`, 'text-anchor': 'middle' }, k / 2);
  }
}
add(rh, 'path', { d: dh });
add(rv, 'path', { d: dv });
add(rh, 'path', { class: 'extent', d: 'M5 8H368' });
add(rv, 'path', { class: 'extent', d: 'M9 37V400' });
[[rh, 4, 8], [rh, 367, 8], [rv, 9, 36], [rv, 9, 401]].forEach(([r, cx, cy]) => add(r, 'circle', { cx, cy, r: 2 }));
add(rh, 'path', { d: 'M366 9h4l-2 3z' });

// Palette
const colors = ('1a1a1a 333333 4d4d4d 666666 808080 999999 b3b3b3 cccccc e6e6e6 ececec f2f2f2 f9f9f9 ' +
  '800000 ff0000 808000 ffff00 008000 00ff00 008080 00ffff 000080 0000ff 800080 ff00ff ' +
  '2b0000 550000 800000 aa0000 d40000 ff0000 ff2a2a ff5555 ff8080 ffaaaa ffd5d5 ' +
  '280b0b 501616 782121 a02c2c c83737 d35f5f de8787 e9afaf f4d7d7 241c1c 483737 6c5353 916f6f ac9393 c8b7b7 e3dbdb ' +
  '2b1100 552200 803300 aa4400 d45500 ff6600 ff7f2a ff9955 ffb380 ffccaa ffe6d5 ' +
  '28170b 502d16 784421 a05a2c c87137 d38d5f deaa87 e9c6af f4e3d7 241f1c 483e37 6c5d53 917c6f ac9d93 c8beb7 e3dedb ' +
  '2b2200 554400 806600 aa8800 d4aa00 ffcc00 ffd42a ffdd55 ffe680 ffeeaa fff6d5 ' +
  '28220b 504416 786721 a0892c c8ab37 d3bc5f decd87 e9ddaf f4eed7 24221c 484537 6c6753 918a6f').split(' ');
const swatches = document.getElementById('swatches');
colors.forEach(color => {
  const b = document.createElement('button');
  b.style.background = '#' + color;
  b.setAttribute('aria-label', '#' + color);
  swatches.appendChild(b);
});
```
